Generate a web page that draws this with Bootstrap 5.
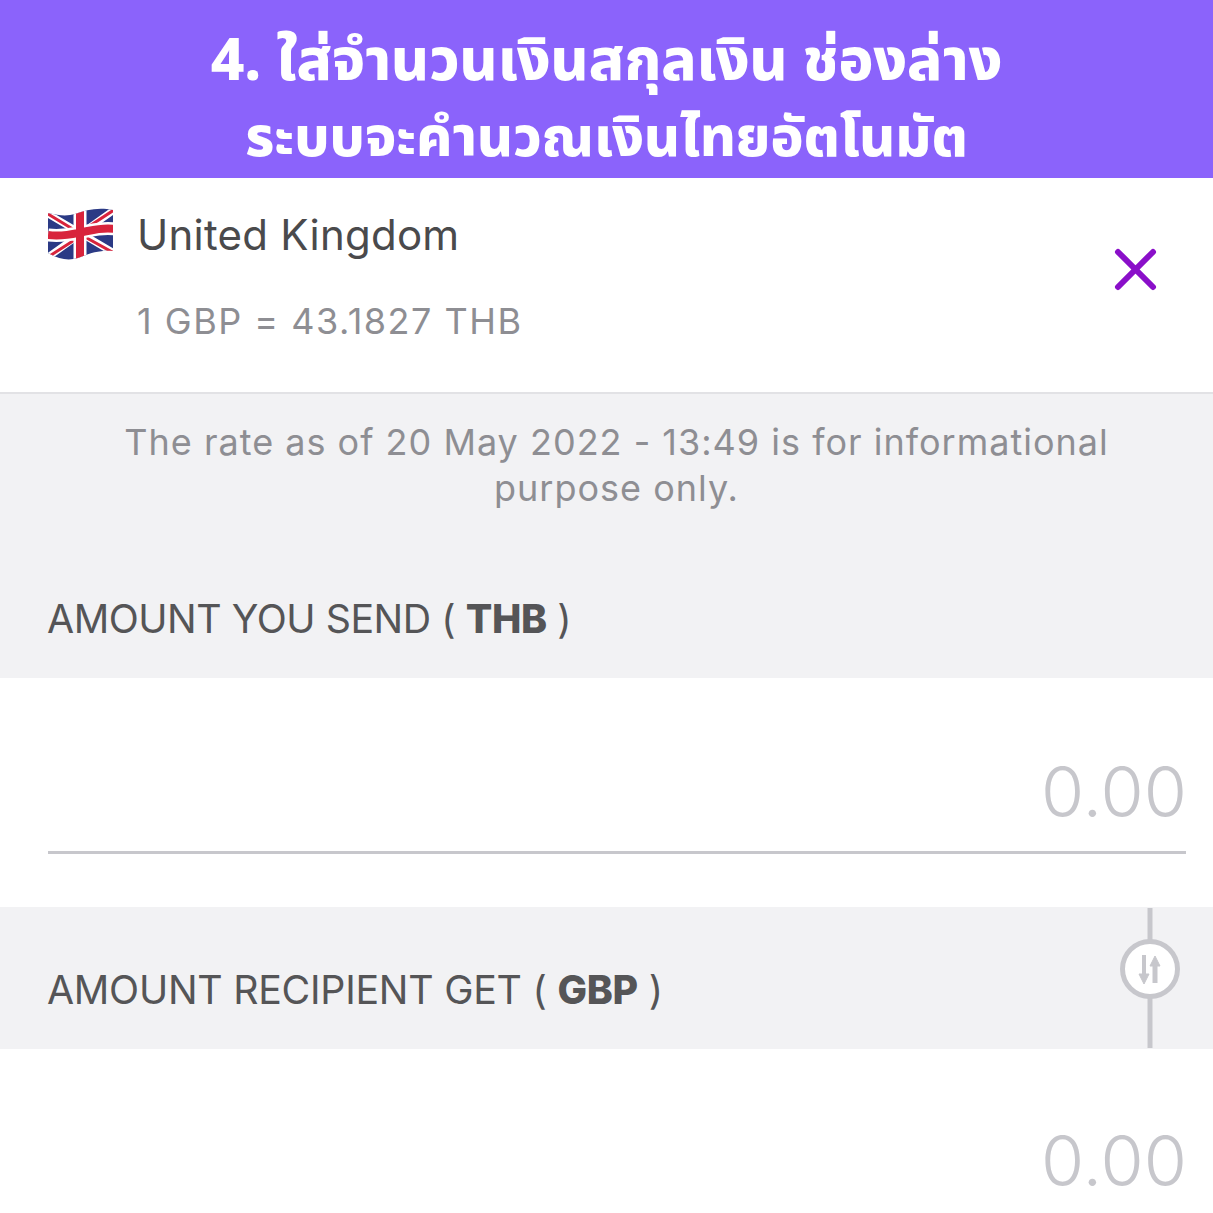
<!DOCTYPE html>
<html lang="th">
  <head>
    <meta charset="UTF-8" />
    <meta name="viewport" content="width=device-width, initial-scale=1.0" />
    <title>Exchange rate</title>
    <link
      href="https://cdn.jsdelivr.net/npm/bootstrap@5.3.0/dist/css/bootstrap.min.css"
      rel="stylesheet"
    />
    <style>
      body {
        font-family: "Inter", "Liberation Sans", sans-serif;
        background: #fff;
        height: 1213px;
        overflow: hidden;
      }
      .promo-head {
        height: 178px;
        background: #8b63fb;
        color: #fff;
        font-family: "Noto Sans", "Noto Sans Thai", "Noto Sans CJK SC", sans-serif;
        font-weight: 800;
        padding-top: 19px;
      }
      .promo-head div {
        white-space: nowrap;
        line-height: 78px;
      }
      .promo-one {
        font-size: 58.3px;
      }
      .promo-two {
        font-size: 55.2px;
        margin-top: -1px;
      }
      .country-box {
        height: 216px;
        border-bottom: 2px solid #e2e2e5;
        padding: 29px 56px 0 48px;
      }
      .flag-icon {
        width: 67px;
        height: 56px;
      }
      .country-name {
        font-size: 42px;
        line-height: 50px;
        color: #4a4a4c;
        margin-left: 22px;
        letter-spacing: 0.25px;
      }
      .rate-line {
        font-size: 36px;
        line-height: 44px;
        color: #8e8e93;
        margin-left: 89px;
        margin-top: 36px;
        letter-spacing: 1.5px;
      }
      .close-icon {
        position: absolute;
        right: 55px;
        top: 69px;
        width: 44px;
        height: 44px;
      }
      .note-box {
        height: 284px;
        background: #f2f2f4;
        color: #8e8e93;
      }
      .note-text {
        font-size: 36px;
        line-height: 46px;
        padding-top: 25px;
        padding-left: 20px;
        letter-spacing: 1px;
      }
      .label-line {
        font-size: 39.3px;
        line-height: 46px;
        color: #555557;
        padding-left: 47px;
        letter-spacing: -0.45px;
      }
      .label-line b {
        font-weight: 800;
      }
      .note-box .label-line {
        margin-top: 85px;
      }
      .amount-box {
        height: 229px;
        padding: 77px 26px 0 48px;
      }
      .amount-value {
        font-size: 70px;
        font-weight: 350;
        line-height: 74px;
        color: #c7c7cc;
      }
      .amount-rule {
        height: 3px;
        background: #c7c7cc;
        margin: 22px 1px 0 0;
      }
      .get-box {
        height: 142px;
        background: #f2f2f4;
      }
      .get-box .label-line {
        padding-top: 24px;
        letter-spacing: -0.25px;
      }
      .swap-icon {
        position: absolute;
        right: 33px;
        top: 0;
        width: 60px;
        height: 142px;
      }
      .last-box {
        padding: 75px 26px 0 48px;
      }
    </style>
  </head>

  <body>
    <div class="promo-head text-center">
      <div class="promo-one">4. ใส่จำนวนเงินสกุลเงิน ช่องล่าง</div>
      <div class="promo-two">ระบบจะคำนวณเงินไทยอัตโนมัต</div>
    </div>

    <div class="country-box position-relative">
      <div class="d-flex align-items-center">
        <svg class="flag-icon" viewBox="0 0 67 56">
          <defs>
            <clipPath id="flagClip">
              <path d="M0 6 C12 9 20 9 27 7 C38 3 50 0 65 3 L65 44 C50 43 40 47 30 51 C20 54 10 52 0 46 Z" />
            </clipPath>
          </defs>
          <g clip-path="url(#flagClip)">
            <rect width="67" height="56" fill="#2b3a85" />
            <path d="M0 7 L66 46 M66 3 L0 50" stroke="#fff" stroke-width="7" />
            <path d="M0 7 L28 24 M37 30 L66 46 M66 3 L37 22 M28 32 L0 50" stroke="#d8243c" stroke-width="3" />
            <path d="M32 0 V56 M0 28 C15 30 25 27 35 25 C45 23 55 20 67 22" stroke="#fff" stroke-width="13" fill="none" />
            <path d="M32 0 V56 M0 28 C15 30 25 27 35 25 C45 23 55 20 67 22" stroke="#d8243c" stroke-width="8" fill="none" />
          </g>
        </svg>
        <div class="country-name">United Kingdom</div>
      </div>
      <div class="rate-line">1 GBP = 43.1827 THB</div>
      <svg class="close-icon" viewBox="0 0 44 44">
        <path d="M4 5 L39 40 M39 5 L4 40" stroke="#8a0fc9" stroke-width="6" stroke-linecap="round" />
      </svg>
    </div>

    <div class="note-box">
      <div class="note-text text-center">
        The rate as of 20 May 2022 - 13:49 is for informational<br />purpose only.
      </div>
      <div class="label-line">AMOUNT YOU SEND ( <b>THB</b> )</div>
    </div>

    <div class="amount-box">
      <div class="amount-value text-end">0.00</div>
      <div class="amount-rule"></div>
    </div>

    <div class="get-box position-relative d-flex align-items-center">
      <div class="label-line">AMOUNT RECIPIENT GET ( <b>GBP</b> )</div>
      <svg class="swap-icon" viewBox="0 0 60 142">
        <path d="M30 1 V35 M30 90 V141" stroke="#c7c7cc" stroke-width="5" />
        <circle cx="30" cy="62" r="27.5" fill="#fff" stroke="#c7c7cc" stroke-width="5" />
        <path d="M24 48 V68" stroke="#c7c7cc" stroke-width="4" />
        <path d="M19 67 H29 L24 77 Z" stroke="#c7c7cc" stroke-width="1" fill="#c7c7cc" />
        <path d="M35 76 V58" stroke="#c7c7cc" stroke-width="5" />
        <path d="M30 59 H40 L35 49 Z" stroke="#c7c7cc" stroke-width="1" fill="#c7c7cc" />
      </svg>
    </div>

    <div class="last-box">
      <div class="amount-value text-end">0.00</div>
    </div>

    <script src="https://cdn.jsdelivr.net/npm/bootstrap@5.3.0/dist/js/bootstrap.bundle.min.js"></script>
  </body>
</html>
